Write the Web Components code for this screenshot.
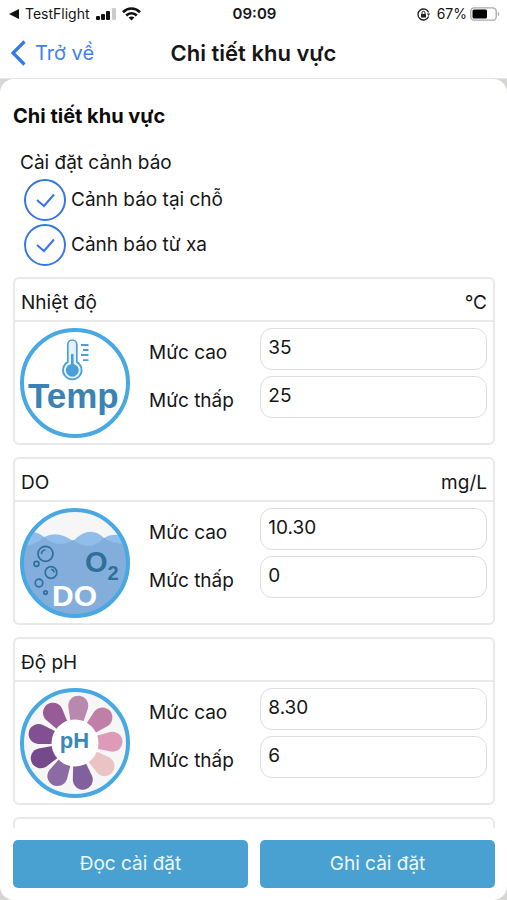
<!DOCTYPE html>
<html lang="vi">
<head>
<meta charset="utf-8">
<meta name="viewport" content="width=device-width, initial-scale=1">
<title>Chi tiết khu vực</title>
<style>
  body {
    margin: 0;
    background: #fff;
    color: #161616;
    font: 19px/24px Inter, "Noto Sans", sans-serif;
  }
</style>
</head>
<body>
<area-page></area-page>

<template id="icon-temp">
  <svg viewBox="0 0 110 110" aria-hidden="true">
    <circle cx="55" cy="55" r="53" fill="#fff" stroke="#48a8e2" stroke-width="4"/>
    <path d="M47.8 34V16.5a4.5 4.5 0 0 1 9 0V34a9.3 9.3 0 1 1-9 0Z" fill="#e4f2fb" stroke="#4a9fd8" stroke-width="1.7"/>
    <path d="M52.3 27v14" stroke="#4a9fd8" stroke-width="2.6" stroke-linecap="round"/>
    <circle cx="52.3" cy="42.3" r="6.4" fill="#4a9fd8"/>
    <path d="M61 17h7.5M63 22h5.5M61 27h7.5M63 32.2h5.5" stroke="#4a9fd8" stroke-width="1.8"/>
    <text x="8" y="80" font-family="Liberation Sans, sans-serif" font-size="35" font-weight="700" fill="#3c83b4">Temp</text>
  </svg>
</template>

<template id="icon-do">
  <svg viewBox="0 0 110 110" aria-hidden="true">
    <defs><clipPath id="disc"><circle cx="55" cy="55" r="53"/></clipPath></defs>
    <circle cx="55" cy="55" r="53" fill="#f6f6f6"/>
    <g clip-path="url(#disc)">
      <path d="M2 28Q14 20 24 29Q38 22 53 33Q70 16 84 30Q95 23 108 31V50H2Z" fill="#90bde9"/>
      <path d="M2 38Q15 38 24 29Q32 36 40 36Q47 36 53 32Q61 38 68 38Q76 38 84 30Q92 36 108 36V110H2Z" fill="#83aedb"/>
    </g>
    <g fill="none" stroke="#2d7099" stroke-width="1.7">
      <circle cx="25.5" cy="45.8" r="7.5"/>
      <path d="M21.5 46a4 4 0 0 1 4-4"/>
      <circle cx="16.5" cy="55.8" r="2.5"/>
      <circle cx="31" cy="64.5" r="5.8"/>
      <path d="M31 61.5a3 3 0 0 1 3 3"/>
      <circle cx="19" cy="75" r="3.8"/>
      <circle cx="25.5" cy="84.5" r="1.7"/>
    </g>
    <g font-family="Liberation Sans, sans-serif" font-weight="700">
      <text x="65" y="64" font-size="29" fill="#2d7099">O<tspan font-size="20" dy="8">2</tspan></text>
      <text x="32" y="98" font-size="30" fill="#fff">DO</text>
    </g>
    <circle cx="55" cy="55" r="53" fill="none" stroke="#48a8e2" stroke-width="4"/>
  </svg>
</template>

<template id="icon-ph">
  <svg viewBox="0 0 110 110" aria-hidden="true">
    <defs><path id="petal" d="M-6.5-22L-9.8-35.5A10 10 0 1 1 9.8-35.5L6.5-22Z"/></defs>
    <circle cx="55" cy="55" r="53" fill="#f6f6f6" stroke="#48a8e2" stroke-width="4"/>
    <g transform="translate(55 55)">
      <use href="#petal" transform="rotate(5)" fill="#b988af"/>
      <use href="#petal" transform="rotate(47)" fill="#c07fa7"/>
      <use href="#petal" transform="rotate(88)" fill="#dd9ab9"/>
      <use href="#petal" transform="rotate(128)" fill="#ecc3c5"/>
      <use href="#petal" transform="rotate(168)" fill="#80619d"/>
      <use href="#petal" transform="rotate(208)" fill="#8c6ba4"/>
      <use href="#petal" transform="rotate(246)" fill="#744a8a"/>
      <use href="#petal" transform="rotate(284)" fill="#824f92"/>
      <use href="#petal" transform="rotate(324)" fill="#975b97"/>
      <circle r="23.5" fill="#fff"/>
    </g>
    <text x="54.5" y="60" text-anchor="middle" font-family="Liberation Sans, sans-serif" font-size="22" font-weight="700" fill="#3a87b8">pH</text>
  </svg>
</template>

<script>
class StatusBar extends HTMLElement {
  constructor () {
    super()
    this.attachShadow({ mode: 'open' }).innerHTML = `
      <style>
        :host {
          display: grid;
          grid-template-columns: 1fr auto 1fr;
          align-items: center;
          height: 28px;
          padding: 0 7px 0 9px;
          font-size: 14px;
          line-height: 20px;
        }
        div { display: flex; align-items: center; gap: 5px; }
        .right { justify-content: flex-end; gap: 3px; }
        .lock { margin-right: 4px; }
        b { font-weight: 600; font-size: 15px; }
      </style>
      <div>
        <svg width="11" height="10"><path d="M0 5L10 0V10Z" fill="#111"/></svg>
        <span>TestFlight</span>
        <svg width="22" height="13" fill="#111">
          <rect x="1" y="8" width="4" height="4" rx="1"/>
          <rect x="6" y="6" width="4" height="6" rx="1"/>
          <rect x="11" y="3" width="4" height="9" rx="1"/>
          <rect x="17" width="4" height="12" rx="1" fill="#ccc"/>
        </svg>
        <svg width="19" height="14" viewBox="0 0 19 14" fill="none" stroke="#111" stroke-width="2.6">
          <path d="M1 5.2C6 .3 13 .3 18 5.2M4.2 8.5c3-3 7.6-3 10.6 0"/>
          <path d="M6.6 10.6c1.7-1.4 4.1-1.4 5.8 0L9.5 13.6Z" fill="#111" stroke="none"/>
        </svg>
      </div>
      <b>09:09</b>
      <div class="right">
        <svg class="lock" width="13" height="13" viewBox="0 0 13 13" fill="none" stroke="#222">
          <path d="M11.6 8.5A5.5 5.5 0 1 1 11.6 4.5" stroke-width="1.3"/>
          <path d="M10 5.5h3l-1.5 2.5z" fill="#222" stroke="none"/>
          <path d="M4 6h5v3.5H4z" fill="#222" stroke="none"/>
          <path d="M5 6V4.8a1.5 1.5 0 0 1 3 0V6"/>
        </svg>
        <span>67%</span>
        <svg width="30" height="14" viewBox="0 0 30 14">
          <rect x=".8" y=".8" width="25.4" height="12.4" rx="3.5" fill="#fff" stroke="#aaa" stroke-width="1.3"/>
          <rect x="2.5" y="2.5" width="14.5" height="9" rx="1.5" fill="#000"/>
          <path d="M27.8 4.8q3 2.2 0 4.4z" fill="#aaa"/>
        </svg>
      </div>
    `
  }
}
window.customElements.define('status-bar', StatusBar)

class NavBar extends HTMLElement {
  constructor () {
    super()
    this.attachShadow({ mode: 'open' }).innerHTML = `
      <style>
        :host {
          display: grid;
          grid-template-columns: 1fr auto 1fr;
          align-items: center;
          height: 50px;
          padding: 0 11px;
          border-bottom: 1px solid #e6e6e6;
        }
        a {
          display: flex;
          align-items: center;
          gap: 9px;
          color: #3f82ee;
          font-size: 20px;
          text-decoration: none;
        }
        h1 { margin: 0; font-size: 22px; font-weight: 600; }
      </style>
      <a href="#">
        <svg width="15" height="26" viewBox="0 0 15 26" fill="none" stroke="#3279ee" stroke-width="3.2"><path d="M13.5 1.5L2 13L13.5 24.5"/></svg>
        <span>Trở về</span>
      </a>
      <h1><slot></slot></h1>
    `
  }
}
window.customElements.define('nav-bar', NavBar)

class CheckRow extends HTMLElement {
  constructor () {
    super()
    this.attachShadow({ mode: 'open' }).innerHTML = `
      <style>
        :host { display: block; }
        label { display: flex; gap: 5px; line-height: 42px; }
        .box { display: grid; }
        .box > * { grid-area: 1 / 1; }
        input {
          appearance: none;
          width: 42px;
          height: 42px;
          margin: 0;
          border: 2px solid #3675e6;
          border-radius: 50%;
        }
        svg { pointer-events: none; visibility: hidden; }
        input:checked + svg { visibility: visible; }
      </style>
      <label>
        <span class="box">
          <input type="checkbox" checked>
          <svg width="42" height="42" fill="none" stroke="#3675e6" stroke-width="2"><path d="M13 21L20 27L30 15.5"/></svg>
        </span>
        <slot></slot>
      </label>
    `
  }
}
window.customElements.define('check-row', CheckRow)

class ThresholdCard extends HTMLElement {
  connectedCallback () {
    const name = this.getAttribute('name')
    const unit = this.getAttribute('unit') || ''
    const high = this.getAttribute('high') || ''
    const low = this.getAttribute('low') || ''
    const shadowRoot = this.attachShadow({ mode: 'open' })
    shadowRoot.innerHTML = `
      <style>
        :host {
          display: block;
          flex: none;
          min-height: 40px;
          border: 2px solid #e9e9e9;
          border-radius: 6px;
        }
        header {
          display: flex;
          justify-content: space-between;
          padding: 12px 6px 5px;
          border-bottom: 2px solid #e9e9e9;
        }
        h3 { margin: 0; font-size: inherit; font-weight: 400; }
        .body {
          display: grid;
          grid-template-columns: 110px 1fr;
          gap: 19px;
          padding: 6px 6px 5px 5px;
        }
        .icon svg { display: block; width: 110px; height: 110px; }
        .fields {
          display: grid;
          grid-template-columns: 112fr 228fr;
          grid-auto-rows: 42px;
          gap: 6px 0;
        }
        label { padding-top: 13px; }
        input {
          box-sizing: border-box;
          width: 100%;
          min-width: 0;
          height: 42px;
          margin: 0;
          padding: 0 7px 4px;
          border: 1px solid #dedede;
          border-radius: 12px;
          background: #fff;
          color: inherit;
          font: inherit;
        }
      </style>
    `
    if (!name) return
    shadowRoot.innerHTML += `
      <header><h3>${name}</h3><span>${unit}</span></header>
      <div class="body">
        <div class="icon"></div>
        <div class="fields">
          <label for="high">Mức cao</label>
          <input id="high" inputmode="decimal" value="${high}">
          <label for="low">Mức thấp</label>
          <input id="low" inputmode="decimal" value="${low}">
        </div>
      </div>
    `
    const icon = document.getElementById('icon-' + this.getAttribute('icon'))
    if (icon) shadowRoot.querySelector('.icon').append(icon.content.cloneNode(true))
  }
}
window.customElements.define('threshold-card', ThresholdCard)

class ActionButton extends HTMLElement {
  constructor () {
    super()
    this.attachShadow({ mode: 'open' }).innerHTML = `
      <style>
        :host { display: block; flex: 1; }
        button {
          width: 100%;
          height: 48px;
          padding: 0;
          border: 0;
          border-radius: 5px;
          background: #48a1d1;
          color: #edf8ff;
          font: inherit;
        }
      </style>
      <button type="button"><slot></slot></button>
    `
  }
}
window.customElements.define('action-button', ActionButton)

class AreaPage extends HTMLElement {
  constructor () {
    super()
    this.attachShadow({ mode: 'open' }).innerHTML = `
      <style>
        :host { display: flex; flex-direction: column; height: 100vh; }
        .backdrop { flex: 1; display: flex; min-height: 0; background: #d6d7d5; }
        main {
          flex: 1;
          display: flex;
          flex-direction: column;
          min-width: 0;
          border-radius: 14px;
          background: #fff;
        }
        .scroll { flex: 1; min-height: 0; overflow: hidden; padding: 25px 12px 0 13px; }
        h2 { margin: 0; font-size: 20px; font-weight: 700; color: #0c0c0c; }
        fieldset { margin: 23px 0 0; padding: 0 0 0 11px; border: 0; }
        legend { margin-left: -4px; padding: 0; }
        .checks { display: grid; gap: 3px; padding-top: 4px; }
        .cards { display: flex; flex-direction: column; gap: 12px; margin-top: 11px; }
        footer { display: flex; gap: 12px; padding: 12px 12px 12px 13px; }
      </style>
      <status-bar></status-bar>
      <nav-bar>Chi tiết khu vực</nav-bar>
      <div class="backdrop">
        <main>
          <div class="scroll">
            <h2>Chi tiết khu vực</h2>
            <fieldset>
              <legend>Cài đặt cảnh báo</legend>
              <div class="checks">
                <check-row>Cảnh báo tại chỗ</check-row>
                <check-row>Cảnh báo từ xa</check-row>
              </div>
            </fieldset>
            <div class="cards">
              <threshold-card icon="temp" name="Nhiệt độ" unit="°C" high="35" low="25"></threshold-card>
              <threshold-card icon="do" name="DO" unit="mg/L" high="10.30" low="0"></threshold-card>
              <threshold-card icon="ph" name="Độ pH" high="8.30" low="6"></threshold-card>
              <threshold-card></threshold-card>
            </div>
          </div>
          <footer>
            <action-button>Đọc cài đặt</action-button>
            <action-button>Ghi cài đặt</action-button>
          </footer>
        </main>
      </div>
    `
  }
}
window.customElements.define('area-page', AreaPage)
</script>
</body>
</html>
